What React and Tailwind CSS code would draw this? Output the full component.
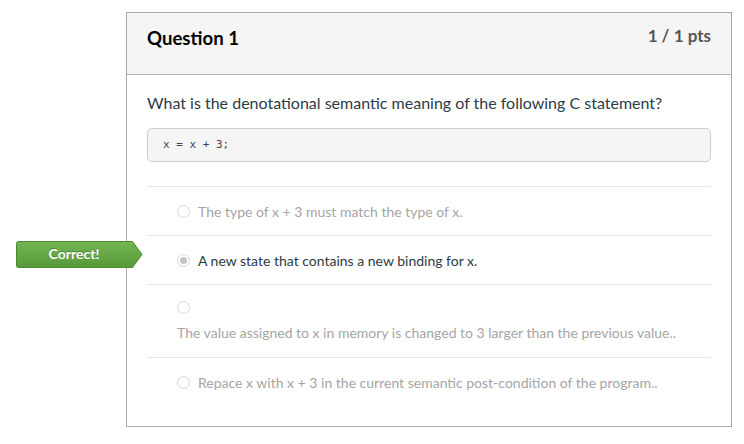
export default function App() {
  const Radio = ({ selected }) => (
    <span className="inline-flex w-[13px] h-[13px] rounded-full border border-[#d6d6d6] bg-white items-center justify-center shrink-0">
      {selected && <span className="w-[7px] h-[7px] rounded-full bg-[#c4c4c4]" />}
    </span>
  );
  return (
    <div className="relative w-[744px] h-[444px] bg-white" style={{ fontFamily: "Lato, 'Liberation Sans', sans-serif" }}>
      <div className="absolute left-[126px] top-[12px] w-[606px] h-[415px] border border-[#a8a8a8] bg-white flex flex-col">
        <div className="h-[62px] bg-[#f5f5f5] border-b border-[#b4b4b4] flex items-start justify-between px-[20px]">
          <div className="mt-[12px] text-[18.6px] font-bold text-[#000]">Question 1</div>
          <div className="mt-[10px] text-[17px] font-bold text-[#555]">1 / 1 pts</div>
        </div>
        <div className="px-[20px]">
          <div className="mt-[17px] text-[16px] text-[#2d3b45] leading-[22px]">What is the denotational semantic meaning of the following C statement?</div>
          <div className="mt-[14px] h-[34px] rounded-[5px] border border-[#c7cdd1] bg-[#f5f5f5] flex items-center px-[15px] text-[11px] text-[#444]" style={{ fontFamily: "'DejaVu Sans Mono', monospace" }}>x = x + 3;</div>
          <div className="mt-[24px] border-t border-[#e6e6e6]">
            <div className="h-[49px] flex items-center gap-[8px] pl-[30px] border-b border-[#e6e6e6] text-[14px] text-[#a5a5a5]">
              <Radio />
              <span>The type of x + 3 must match the type of x.</span>
            </div>
            <div className="h-[49px] flex items-center gap-[8px] pl-[30px] border-b border-[#e6e6e6] text-[14px] text-[#2d3b45]">
              <Radio selected />
              <span>A new state that contains a new binding for x.</span>
            </div>
            <div className="h-[73px] flex flex-col border-b border-[#e6e6e6] text-[14px] text-[#a5a5a5]">
              <div className="pl-[30px] mt-[16px] flex"><Radio /></div>
              <div className="pl-[30px] mt-[8px]">The value assigned to x in memory is changed to 3 larger than the previous value..</div>
            </div>
            <div className="h-[48px] flex items-center gap-[8px] pl-[30px] text-[14px] text-[#a5a5a5]">
              <Radio />
              <span>Repace x with x + 3 in the current semantic post-condition of the program..</span>
            </div>
          </div>
        </div>
      </div>
      <div className="absolute left-[16px] top-[241px] h-[27px] flex">
        <div className="relative w-[127px] h-[27px]">
          <svg width="127" height="27" className="absolute inset-0">
            <defs>
              <linearGradient id="g" x1="0" y1="0" x2="0" y2="1">
                <stop offset="0" stopColor="#74b554" />
                <stop offset="1" stopColor="#57993a" />
              </linearGradient>
            </defs>
            <path d="M0.5 2.5 Q0.5 0.5 2.5 0.5 H116.5 L126 13.5 L116.5 26.5 H2.5 Q0.5 26.5 0.5 24.5 Z" fill="url(#g)" stroke="#4a8a30" strokeWidth="1" />
          </svg>
          <div className="absolute left-0 top-0 w-[116px] h-[24px] flex items-center justify-center text-[14px] font-bold text-white" style={{ textShadow: "0 -1px 0 rgba(0,0,0,0.25)" }}>Correct!</div>
        </div>
      </div>
    </div>
  );
}
